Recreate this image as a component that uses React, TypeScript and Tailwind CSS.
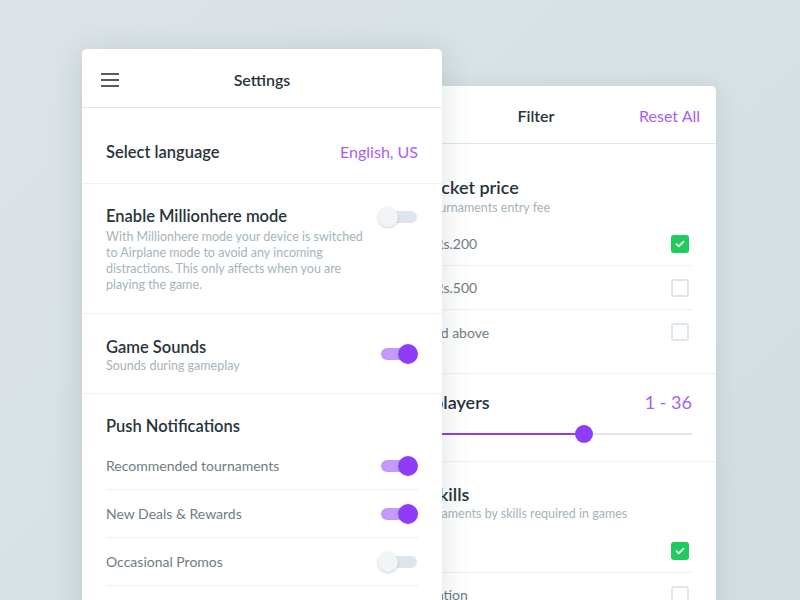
import { ReactNode } from 'react';

function Toggle({ on }: { on: boolean }) {
  return (
    <div className="relative h-[20px] w-[40px] shrink-0">
      <div
        className={`absolute top-[4px] h-[12px] w-[34px] rounded-full ${
          on ? 'left-[3px] bg-[#c39cf9]' : 'left-[5px] bg-[#dde6ec]'
        }`}
      />
      <div
        className={`absolute top-0 h-[20px] w-[20px] rounded-full ${
          on
            ? 'right-0 bg-[#8e3cf8]'
            : 'left-0 bg-[#f2f5f7] shadow-[0_1px_3px_rgba(40,60,80,0.25)]'
        }`}
      />
    </div>
  );
}

function Check({ on }: { on: boolean }) {
  if (on) {
    return (
      <div className="flex h-[18px] w-[18px] items-center justify-center rounded-[3px] bg-[#1fcb5b]">
        <svg width="10" height="8" viewBox="0 0 10 8" fill="none">
          <path d="M1.5 4.2L3.8 6.3L8.5 1.7" stroke="white" strokeWidth="1.8" strokeLinecap="round" strokeLinejoin="round" />
        </svg>
      </div>
    );
  }
  return <div className="h-[18px] w-[18px] rounded-[3px] border-2 border-[#dde6ec]" />;
}

function NotifRow({ label, on }: { label: string; on: boolean }) {
  return (
    <div className="flex h-[48px] items-center justify-between border-b border-[#eef1f3]">
      <span className="text-[14px] text-[#6f7c85]">{label}</span>
      <Toggle on={on} />
    </div>
  );
}

function OptionRow({ label, on, last }: { label: string; on: boolean; last?: boolean }) {
  return (
    <div className={`flex h-[44px] items-center justify-between pr-[3px] ${last ? '' : 'border-b border-[#eef1f3]'}`}>
      <span className="text-[14px] text-[#6f7c85]">{label}</span>
      <Check on={on} />
    </div>
  );
}

function Section({ children, border = true }: { children: ReactNode; border?: boolean }) {
  return <div className={`px-[24px] ${border ? 'border-b border-[#eef1f3]' : ''}`}>{children}</div>;
}

function SettingsCard() {
  return (
    <div className="relative z-10 ml-[82px] mt-[49px] h-[600px] w-[360px] shrink-0 rounded-[5px] bg-white shadow-[0_4px_30px_rgba(40,60,75,0.16)]">
      {/* header */}
      <div className="relative flex h-[59px] items-center justify-center border-b border-[#dfe6ea] pt-[3px]">
        <svg className="absolute left-[19px] top-[24px]" width="18" height="14" viewBox="0 0 18 14">
          <path d="M0 1h18M0 7h18M0 13h18" stroke="#1f2a33" strokeWidth="1.4" />
        </svg>
        <span className="text-[16px] font-semibold text-[#28343c]">Settings</span>
      </div>

      <Section>
        <div className="flex h-[75px] items-center justify-between pt-[13px]">
          <span className="text-[16.5px] font-semibold text-[#28343c]">Select language</span>
          <span className="text-[16px] text-[#a65ff6]">English, US</span>
        </div>
      </Section>

      <Section>
        <div className="flex h-[129px] justify-between pt-[22px]">
          <div className="w-[262px]">
            <div className="text-[16.5px] font-semibold leading-[20px] text-[#28343c]">Enable Millionhere mode</div>
            <p className="mt-[3px] text-[12.5px] leading-[16px] text-[#a6b3bb]">
              With Millionhere mode your device is switched to Airplane mode to avoid any incoming distractions. This only affects when you are playing the game.
            </p>
          </div>
          <div className="mt-[1px]">
            <Toggle on={false} />
          </div>
        </div>
      </Section>

      <Section>
        <div className="flex h-[79px] items-center justify-between">
          <div className="pt-[3px]">
            <div className="text-[16.5px] font-semibold leading-[20px] text-[#28343c]">Game Sounds</div>
            <div className="mt-[1px] text-[12.5px] leading-[16px] text-[#a6b3bb]">Sounds during gameplay</div>
          </div>
          <Toggle on />
        </div>
      </Section>

      <div className="px-[24px] pt-[22px]">
        <div className="text-[16.5px] font-semibold leading-[20px] text-[#28343c]">Push Notifications</div>
        <div className="mt-[6px]">
          <NotifRow label="Recommended tournaments" on />
          <NotifRow label="New Deals & Rewards" on />
          <NotifRow label="Occasional Promos" on={false} />
        </div>
      </div>
    </div>
  );
}

function FilterCard() {
  return (
    <div className="ml-[-86px] mt-[86px] h-[600px] w-[360px] shrink-0 rounded-[5px] bg-white shadow-[0_4px_24px_rgba(40,60,75,0.1)]">
      <div className="relative flex h-[58px] items-center justify-center border-b border-[#dfe6ea] pt-[2px]">
        <span className="text-[16px] font-semibold text-[#28343c]">Filter</span>
        <span className="absolute right-[16px] text-[16px] text-[#a65ff6]">Reset All</span>
      </div>

      <Section>
        <div className="pt-[32px] pb-[19px]">
          <div className="text-[18px] font-semibold leading-[22px] text-[#28343c]">Entry Ticket price</div>
          <div className="mt-[2px] text-[12.5px] leading-[16px] text-[#a6b3bb]">Filter by tournaments entry fee</div>
          <div className="mt-[6px]">
            <OptionRow label="Rs.100 - Rs.200" on />
            <OptionRow label="Rs.200 - Rs.500" on={false} />
            <OptionRow label="Rs.500 and above" on={false} last />
          </div>
        </div>
      </Section>

      <Section>
        <div className="pt-[17px] pb-[18px]">
          <div className="flex items-center justify-between">
            <span className="text-[18px] font-semibold leading-[22px] text-[#28343c]">No. of players</span>
            <span className="text-[18px] leading-[22px] text-[#a65ff6]">1 - 36</span>
          </div>
          <div className="relative mt-[12px] h-[18px]">
            <div className="absolute left-0 right-0 top-[8px] h-[2px] bg-[#dde6ec]" />
            <div className="absolute left-0 top-[8px] h-[2px] w-[204px] bg-[#8e3cf8]" />
            <div className="absolute left-[195px] top-0 h-[18px] w-[18px] rounded-full bg-[#8e3cf8]" />
          </div>
        </div>
      </Section>

      <Section border={false}>
        <div className="pt-[21px]">
          <div className="text-[18px] font-semibold leading-[22px] text-[#28343c]">Game skills</div>
          <div className="mt-[1px] text-[12.5px] leading-[16px] text-[#a6b3bb]">Filter tournaments by skills required in games</div>
          <div className="mt-[7px]">
            <OptionRow label="Strategy" on />
            <OptionRow label="Concentration" on={false} />
          </div>
        </div>
      </Section>
    </div>
  );
}

export default function App() {
  return (
    <div className="flex h-[600px] w-[800px] overflow-hidden bg-[linear-gradient(135deg,#dce4e7,#d3dde1)] font-['Lato',sans-serif]">
      <SettingsCard />
      <FilterCard />
    </div>
  );
}
